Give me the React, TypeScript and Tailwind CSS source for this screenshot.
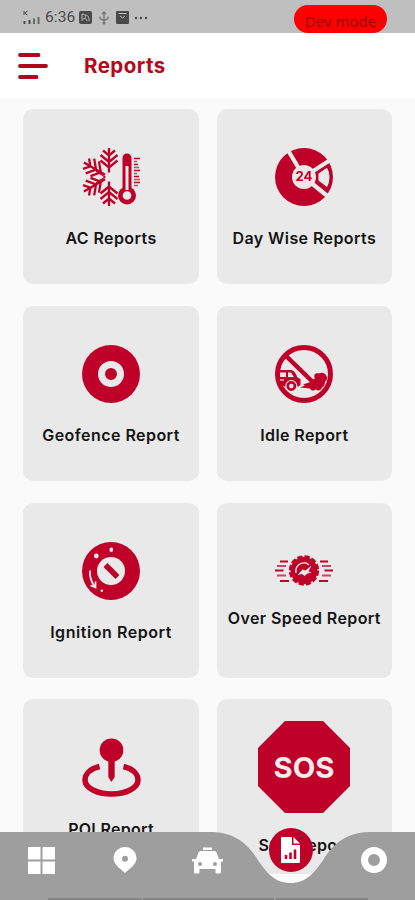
import type { ReactNode } from "react"

const RED = "#bf0029"
const CARD = "#e9e9e9"

function AcIcon() {
  return (
    <svg width="59" height="58" viewBox="0 0 59 58" fill="none" stroke={RED} strokeWidth="2.3">
      {[0, -60, -120, 180].map((angle) => (
        <path
          key={angle}
          transform={`rotate(${angle} 27 29)`}
          d="M27 24.5V0M21 2.5l6 5 6-5M18.5 7l8.5 7 8.5-7M18.5 12.5l8.5 7 8.5-7"
        />
      ))}
      <path d="M14 23l9 6-9 6" strokeWidth="1.3" />
      <path d="M45 10v34" strokeWidth="9" strokeLinecap="round" />
      <circle cx="45" cy="47.5" r="9" fill={RED} stroke="none" />
      <path d="M45 18v24" stroke={CARD} strokeWidth="3" />
      <circle cx="45" cy="47.5" r="4.3" fill={CARD} stroke="none" />
      <path d="M52 10.5h6M52 16.5h4M52 22.5h6M52 28.5h5M52 34.5h6" strokeWidth="1.6" />
      <path d="M52 13.5h3M52 19.5h5M52 25.5h3M52 31.5h6M52 37.5h4" strokeWidth="1.4" opacity=".7" />
    </svg>
  )
}

function DayWiseIcon() {
  return (
    <svg width="58" height="58" viewBox="0 0 58 58">
      <circle cx="29" cy="29" r="29" fill={RED} />
      <path d="M29 29L11 -1M29 29L60 9M29 29l27 22" stroke={CARD} strokeWidth="4.2" />
      <path d="M52.5 18Q59 29 52.5 41L42 33V25Z" fill={CARD} stroke={RED} strokeWidth="2.4" />
      <path d="M29 29m-12 0a12 12 0 1 0 24 0a12 12 0 1 0-24 0" fill={CARD} />
      <path d="M42.2 24.5v9" stroke={RED} strokeWidth="2.2" />
      <text
        x="29"
        y="33.3"
        textAnchor="middle"
        textLength="17"
        lengthAdjust="spacingAndGlyphs"
        fontSize="12.5"
        fontWeight="700"
        fontFamily="Inter, sans-serif"
        fill={RED}
      >
        24
      </text>
    </svg>
  )
}

function GeofenceIcon() {
  return (
    <svg width="58" height="58" viewBox="0 0 58 58">
      <circle cx="29" cy="29" r="29" fill={RED} />
      <circle cx="29" cy="29" r="9.5" fill={RED} stroke={CARD} strokeWidth="7" />
    </svg>
  )
}

function IdleIcon() {
  return (
    <svg width="58" height="58" viewBox="0 0 58 58">
      <circle cx="29" cy="29" r="26.5" fill="none" stroke={RED} strokeWidth="5" />
      <path d="M10 10l34 33" stroke={RED} strokeWidth="4.5" />
      {/* car */}
      <path d="M3 25h13c3 0 5 4 6.5 7.5l3 1.5v6l-2 1.5H9L4 37z" fill={RED} />
      <path d="M5 27.5h6V32H5zM13 27.5h3l3 4.5h-6z" fill={CARD} />
      <path d="M5 35h4" stroke={CARD} strokeWidth="1.2" />
      <circle cx="16.3" cy="41" r="6" fill={CARD} />
      <circle cx="16.3" cy="41" r="3.6" fill="none" stroke={RED} strokeWidth="2.6" />
      {/* exhaust */}
      <path
        d="M25 42.5l5-2-2-1 6-2 3-1c1-2 2-3 3-3-2-3 0-6 4-5 3-2 7 0 7 2 2 2 1 5-1 6 0 3-1 5-3 6-1 3-4 4-6 2-3 2-5 1-6-1z"
        fill={RED}
      />
    </svg>
  )
}

function IgnitionIcon() {
  return (
    <svg width="58" height="58" viewBox="0 0 58 58">
      <circle cx="29" cy="29" r="29" fill={RED} />
      <circle cx="29" cy="29" r="14" fill={CARD} />
      <path d="M23.5 23l12 12" stroke={RED} strokeWidth="5.5" />
      <circle cx="14.3" cy="14" r="2.4" fill={CARD} />
      <ellipse cx="29.3" cy="7.8" rx="1.9" ry="2.3" fill={CARD} />
      <circle cx="19.8" cy="48.7" r="1.3" fill={CARD} />
      <path d="M8 28.5c-.5 6 1 11 4.5 16M8.5 43.5l5 2V39.5" fill="none" stroke={CARD} strokeWidth="1.8" />
    </svg>
  )
}

function OverSpeedIcon() {
  return (
    <svg width="58" height="31" viewBox="0 0 58 31" fill="none">
      <circle cx="29" cy="15.5" r="13.5" fill={RED} />
      <circle cx="29" cy="15.5" r="13.8" stroke={RED} strokeWidth="2.8" strokeDasharray="5.225 2" />
      <path d="M21 18c-1-7 4-11 10-10l3 2" stroke={CARD} strokeWidth="1.4" />
      <path d="M22.5 20l5-5.5 3 1 6-5-3 6 3 1-4 1-3 2.5-2.5-2z" fill={CARD} />
      <path d="M5 6.5h8M0 15.5h8.5M5 26h9M45 6.5h8M49.5 15.5H58M44 26h9" stroke={RED} strokeWidth="1.9" />
      <path d="M2 11h9M2 20.5h9M47 11h9M47 20.5h9" stroke={RED} strokeWidth="1.9" opacity=".7" />
    </svg>
  )
}

function PoiIcon() {
  return (
    <svg width="59" height="59" viewBox="0 0 59 59">
      <path
        d="M17.5 28.5C7.5 31 3 36.5 3 42c0 8 12 14 26.5 14S56 50 56 42c0-5.5-4.5-11-14.5-13.5"
        fill="none"
        stroke={RED}
        strokeWidth="5.5"
      />
      <path d="M26.3 22h6.4v17l-3.2 5-3.2-5z" fill={RED} />
      <circle cx="29.5" cy="12.2" r="11.8" fill={RED} />
    </svg>
  )
}

function SosIcon() {
  return (
    <svg width="92" height="92" viewBox="0 0 92 92">
      <path d="M27 0h38l27 27v38L65 92H27L0 65V27z" fill={RED} />
      <text
        x="46"
        y="57"
        textAnchor="middle"
        textLength="61"
        lengthAdjust="spacingAndGlyphs"
        fontSize="29"
        fontWeight="700"
        fontFamily="Inter, sans-serif"
        fill="#fbeaec"
      >
        SOS
      </text>
    </svg>
  )
}

const reports: { title: string; icon: ReactNode; tracking: string }[] = [
  { title: "AC Reports", icon: <AcIcon />, tracking: "tracking-[0.4px]" },
  { title: "Day Wise Reports", icon: <DayWiseIcon />, tracking: "tracking-[0.4px]" },
  { title: "Geofence Report", icon: <GeofenceIcon />, tracking: "tracking-[0.45px]" },
  { title: "Idle Report", icon: <IdleIcon />, tracking: "tracking-[0.4px]" },
  { title: "Ignition Report", icon: <IgnitionIcon />, tracking: "tracking-[0.55px]" },
  { title: "Over Speed Report", icon: <OverSpeedIcon />, tracking: "tracking-[0.4px]" },
  { title: "POI Report", icon: <PoiIcon />, tracking: "tracking-[0.3px]" },
  { title: "SOS Report", icon: <SosIcon />, tracking: "tracking-[0.3px]" },
]

function StatusBar() {
  return (
    <div className="flex h-[33px] items-end justify-between bg-[#bfbfbf] pr-7 pl-[22px] font-['Roboto',sans-serif]">
      <div className="flex h-[33px] items-center gap-[5px] pt-0.5 text-[#4a4a4a]">
        <svg width="18" height="16" viewBox="0 0 18 16" fill="none" stroke="currentColor">
          <path d="M2 1v4M5.5 1L2.5 3l3 2" strokeWidth="1" />
          <path d="M2.5 11v3M7.5 10v4" strokeWidth="2" />
          <path d="M12 8.5V14M16.5 7v7" strokeWidth="2" opacity=".75" />
        </svg>
        <span className="w-[29px] text-[15.5px] leading-none tracking-[0.1px]">6:36</span>
        <svg width="13" height="13" viewBox="0 0 13 13">
          <rect width="13" height="13" rx="2" fill="currentColor" />
          <path d="M3 10V3c3 0 4 2 3 4M6 4c3 0 4 2 4 6M4 8c2-1 4 0 4 2" fill="none" stroke="#bfbfbf" />
        </svg>
        <svg width="12" height="14" viewBox="0 0 12 14" fill="none" stroke="#777" className="ml-px">
          <path d="M6 1v12M4 3l2-2 2 2M2 5.5v2l4 2 4-2v-2" strokeWidth="1.3" />
          <circle cx="6" cy="12" r="1.5" fill="#777" stroke="none" />
        </svg>
        <svg width="13" height="13" viewBox="0 0 13 13" className="ml-px">
          <rect width="13" height="13" rx="1" fill="currentColor" />
          <path d="M2.5 2.5h8M4 5l2.5 2L9 5" fill="none" stroke="#bfbfbf" />
        </svg>
        <svg width="14" height="4" viewBox="0 0 14 4" fill="currentColor">
          <circle cx="2" cy="2" r="1.2" />
          <circle cx="7" cy="2" r="1.2" />
          <circle cx="12" cy="2" r="1.2" />
        </svg>
      </div>
      <div className="flex h-7 w-[93px] items-center justify-center rounded-full bg-[#ff0000] pt-1 font-['Noto_Sans',sans-serif] text-[15px] leading-none text-[#9a0000]">
        Dev mode
      </div>
    </div>
  )
}

function Header() {
  return (
    <header className="flex h-[65px] items-center bg-white pl-[18px]">
      <svg width="30" height="26" viewBox="0 0 30 26" stroke="#b0061c" strokeWidth="3.8" strokeLinecap="round">
        <path d="M2 2h18.5M2 13h26M2 24h16.5" />
      </svg>
      <h1 className="ml-9 pt-0.5 font-['Inter',sans-serif] text-[20.5px] font-bold tracking-[0.45px] text-[#b30918]">
        Reports
      </h1>
    </header>
  )
}

function BottomNav() {
  return (
    <nav className="absolute bottom-0 left-0 h-[68px] w-full">
      <svg width="415" height="68" viewBox="0 0 415 68" className="absolute inset-0">
        <path
          d="M0 0H212C236 1 247 12 256 25C266 41 275 51 290.5 51C306 51 315 41 325 25C334 12 345 1 369 0H415V68H0Z"
          fill="#9e9e9e"
        />
        <path d="M48 67h93M143 67h131M276 67h92" stroke="#858585" strokeWidth="2" />
      </svg>
      <div className="relative grid h-14 grid-cols-5 place-items-center">
        <svg width="27" height="27" viewBox="0 0 27 27" fill="#fff">
          <path d="M0 0h12.5v12.5H0zM14.5 0H27v12.5H14.5zM0 14.5h12.5V27H0zM14.5 14.5H27V27H14.5z" />
        </svg>
        <svg width="24" height="26" viewBox="0 0 24 26">
          <path d="M12 26C7 21.5.5 17 .5 11.5a11.5 11.5 0 0 1 23 0C23.5 17 17 21.5 12 26z" fill="#fff" />
          <circle cx="12" cy="11.7" r="3" fill="#9e9e9e" />
        </svg>
        <svg width="31" height="27" viewBox="0 0 31 27">
          <path
            d="M11 .5h9V3h-9zM8.5 4h14q1.500 0 2 1.500L27 12h4v2.5h-2V25q0 1.500-1.500 1.500H25q-1.500 0-1.500-1.500v-3h-16v3q0 1.500-1.500 1.500H3.500Q2 26.500 2 25V14.500H0V12h4l2.500-6.500Q7 4 8.500 4z"
            fill="#fff"
          />
          <circle cx="8" cy="17" r="2" fill="#9e9e9e" />
          <circle cx="23" cy="17" r="2" fill="#9e9e9e" />
        </svg>
        <div className="-mt-[21px] flex h-11 w-11 items-center justify-center rounded-full bg-[#bf0029]">
          <svg width="19" height="26" viewBox="0 0 19 26">
            <path d="M1 0h10v8h8v17q0 1-1 1H1q-1 0-1-1V1q0-1 1-1z" fill="#fff" />
            <path d="M12.5 0L19 6.5h-6.5z" fill="#fff" />
            <path d="M5 22v-4M9.5 22v-6.5M14 22v-9.5" stroke={RED} strokeWidth="2.6" />
          </svg>
        </div>
        <svg width="26" height="26" viewBox="0 0 26 26">
          <circle cx="13" cy="13" r="9.5" fill="none" stroke="#fff" strokeWidth="7" />
        </svg>
      </div>
    </nav>
  )
}

export default function App() {
  return (
    <div className="relative h-[900px] w-[415px] overflow-hidden bg-[#fafafa]">
      <StatusBar />
      <Header />
      <main className="grid grid-cols-2 gap-x-[18px] gap-y-[21.7px] pt-[11.4px] pr-[23px] pl-[23.4px]">
        {reports.map((report) => (
          <div
            key={report.title}
            className="flex h-[175px] flex-col items-center justify-center gap-5 rounded-[10px] bg-[#e9e9e9] pt-[5px]"
          >
            {report.icon}
            <span
              className={`font-['Inter',sans-serif] text-[16px] leading-6 font-semibold whitespace-nowrap text-[#151515] ${report.tracking}`}
            >
              {report.title}
            </span>
          </div>
        ))}
      </main>
      <BottomNav />
    </div>
  )
}
